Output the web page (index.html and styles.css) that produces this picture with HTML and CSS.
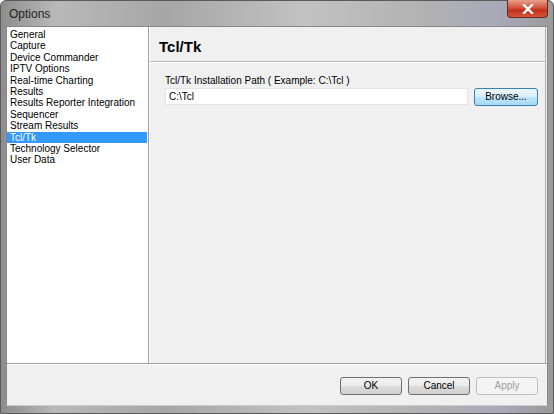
FILE: index.html
```html
<!DOCTYPE html>
<html>
<head>
<meta charset="utf-8">
<link rel="stylesheet" href="styles.css">
</head>
<body>
<div class="window">
  <div class="titlebar">
    <span class="title">Options</span>
    <div class="close"><svg width="12" height="10" viewBox="0 0 12 10"><path d="M2 1 L10 9 M10 1 L2 9" stroke="#fff" stroke-width="2.4" stroke-linecap="square"/></svg></div>
  </div>
  <div class="client">
    <div class="main">
      <ul class="list">
        <li>General</li>
        <li>Capture</li>
        <li>Device Commander</li>
        <li>IPTV Options</li>
        <li>Real-time Charting</li>
        <li>Results</li>
        <li>Results Reporter Integration</li>
        <li>Sequencer</li>
        <li>Stream Results</li>
        <li class="sel">Tcl/Tk</li>
        <li>Technology Selector</li>
        <li>User Data</li>
      </ul>
      <div class="panel">
        <div class="heading">Tcl/Tk</div>
        <div class="body">
          <div class="label">Tcl/Tk Installation Path ( Example: C:\Tcl )</div>
          <div class="row">
            <div class="input">C:\Tcl</div>
            <div class="btn browse">Browse...</div>
          </div>
        </div>
      </div>
    </div>
    <div class="footer">
      <div class="btn">OK</div>
      <div class="btn">Cancel</div>
      <div class="btn disabled">Apply</div>
    </div>
  </div>
</div>
</body>
</html>
```
FILE: styles.css
```css
html, body { margin: 0; padding: 0; }
body { width: 554px; height: 414px; overflow: hidden; font-family: "Liberation Sans", Arial, sans-serif; }
.window {
  width: 554px; height: 414px; box-sizing: border-box;
  background: linear-gradient(90deg, #8d8d8d 0%, #b9b9b9 10%, #a6a6a6 30%, #c2c2c2 55%, #b3b3b3 75%, #a9a9b9 90%, #9a9a9a 100%);
  border: 1px solid #5a5a5a;
  border-radius: 6px 6px 0 0;
  padding: 0 5px 7px 5px;
  display: flex; flex-direction: column;
}
.titlebar { height: 25px; display: flex; justify-content: space-between; align-items: flex-start; flex: none; }
.title { font-family: "Liberation Sans", Arial, sans-serif; font-size: 12px; color: #1e1e1e; padding: 6px 0 0 3px; }
.close {
  width: 41px; height: 18px; margin-top: -1px; margin-right: 0px;
  background: linear-gradient(#e8a08c 0%, #d3553c 45%, #c1301a 60%, #d4553a 100%);
  border: 1px solid #6a2a20; border-top: none; border-radius: 0 0 4px 4px; box-sizing: border-box;
  display: flex; align-items: center; justify-content: center;
}
.client { flex: 1; background: #f0f0f0; display: flex; flex-direction: column; border: 1px solid #888; border-bottom-color: #ccc; }
.main { height: 336px; display: flex; border-bottom: 1px solid #a0a0a0; box-shadow: 0 1px 0 #fff; }
.list {
  margin: 0; padding: 2px 0 0 0; list-style: none; width: 142px; box-sizing: border-box;
  background: #fff; border-right: 1px solid #a0a0a0;
  font-size: 10px; color: #000;
}
.list li { height: 11.4px; line-height: 11.4px; padding-left: 3px; margin-right: 1px; white-space: nowrap; }
.list li.sel { background: #3399ff; color: #fff; }
.panel { flex: 1; display: flex; flex-direction: column; border-left: 1px solid #fff; margin-right: 1px; border-right: 1px solid #b0b0b0; }
.heading { height: 35px; box-sizing: border-box; border-bottom: 1px solid #b8b8b8; box-shadow: 0 1px 0 #fff; font-weight: bold; font-size: 15px; padding: 11px 0 0 9px; color: #000; }
.body { padding: 13px 7px 0 15px; }
.label { font-size: 10px; color: #000; height: 13px; }
.row { display: flex; gap: 6px; }
.input { flex: 1; height: 17px; box-sizing: border-box; background: #fff; border: 1px solid #e3e3e3; font-size: 10px; line-height: 15px; padding-left: 3px; }
.btn {
  height: 18px; box-sizing: border-box; width: 62px; text-align: center; font-size: 10px; line-height: 16px;
  border: 1px solid #707070; border-radius: 3px; color: #000;
  background: linear-gradient(#f2f2f2 0%, #ebebeb 48%, #dddddd 52%, #cfcfcf 100%);
}
.browse { width: 64px; border-color: #3c7fb1; background: linear-gradient(#eaf6fd 0%, #d9f0fc 48%, #bee6fd 52%, #a7d9f5 100%); }
.footer { flex: 1; display: flex; justify-content: flex-end; gap: 6px; padding: 13px 9px 0 0; }
.btn.disabled { color: #a0a0a0; border-color: #c0c0c0; background: #f4f4f4; }
```
